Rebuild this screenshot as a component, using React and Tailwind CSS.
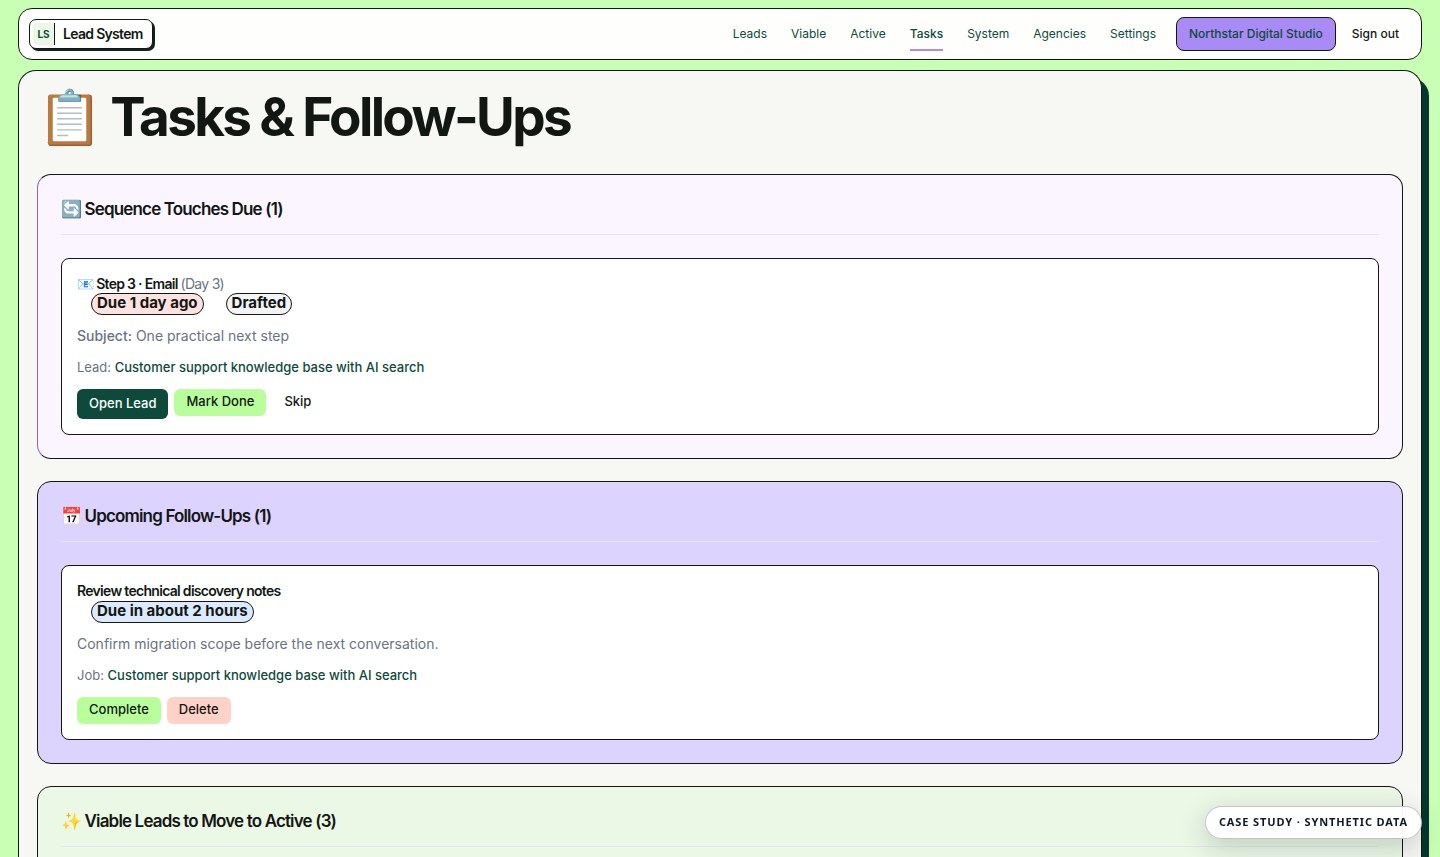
import clsx from 'clsx';

const navLinks = ['Leads', 'Viable', 'Active', 'Tasks', 'System', 'Agencies', 'Settings'];

const Header = ({ active }) => (
  <header className="flex items-center justify-between rounded-[14px] border border-[#131713] bg-[#fefffd] h-[52px] px-[10px]">
    <a
      href="#"
      className="flex items-center h-[30px] rounded-[7px] border border-[#131713] bg-white pl-[3px] pr-[9px] shadow-[2px_2px_0_#10231c]"
    >
      <span className="flex h-[22px] w-[22px] items-center justify-center rounded-l-sm border-r border-[#131713] bg-[#ecf8e6] text-[10px] font-bold text-[#0d4a3c]">
        LS
      </span>
      <span className="ml-2 text-sm font-semibold tracking-tighter">Lead System</span>
    </a>

    <nav className="flex items-center text-xs text-[#0d4a3c]">
      {navLinks.map((label) => (
        <a
          key={label}
          href="#"
          className={clsx(
            'mr-6 border-b-2 pt-[9px] pb-[7px] leading-4 last-of-type:mr-0',
            label === active ? 'border-[#a98bf5] font-medium' : 'border-transparent'
          )}
        >
          {label}
        </a>
      ))}
      <button
        type="button"
        className="ml-5 h-[34px] rounded-lg border border-[#131713] bg-[#a98bf5] px-3 font-medium"
      >
        Northstar Digital Studio
      </button>
      <button type="button" className="ml-1 h-[34px] px-3 font-medium text-[#131713]">
        Sign out
      </button>
    </nav>
  </header>
);

const Section = ({ icon, title, className, children }) => (
  <section className={clsx('rounded-[14px] border border-[#131713] px-[23px] pt-[22px] pb-[23px]', className)}>
    <h2 className="mb-[23px] border-b border-[#e5e7eb] pb-[13px] text-[17px] leading-6 font-semibold tracking-tighter">
      {icon} {title}
    </h2>
    {children}
  </section>
);

const Card = ({ children }) => (
  <article className="rounded-lg border border-[#131713] bg-white p-[15px]">{children}</article>
);

const Badge = ({ className, children }) => (
  <span
    className={clsx(
      'flex h-[22px] items-center rounded-full border border-[#131713] px-[5px] pb-px text-[15px] font-bold',
      className
    )}
  >
    {children}
  </span>
);

const ActionButton = ({ className, children }) => (
  <button
    type="button"
    className={clsx('h-[27px] rounded-md px-3 pb-px text-[13px] font-medium', className)}
  >
    {children}
  </button>
);

const App = () => {
  return (
    <div className="min-h-screen bg-[#c8ffb5] px-[18px] pt-2 font-['Inter',sans-serif] text-[#131713]">
      <Header active="Tasks" />

      <main className="mt-[10px] rounded-t-[18px] border border-b-0 border-[#131713] bg-[#f7f8f3] px-[18px] pt-[15px] pb-8 shadow-[7px_8px_0_#05372e]">
        <h1 className="mb-[26px] text-[53px] leading-[62px] font-bold tracking-tighter">
          📋 Tasks &amp; Follow-Ups
        </h1>

        <div className="flex flex-col gap-[22px]">
          <Section icon="🔄" title="Sequence Touches Due (1)" className="border-l-[#8b5cf6] bg-[#faf5ff]">
            <Card>
              <h3 className="text-sm leading-[19px] font-semibold tracking-tighter">
                📧 Step 3 · Email <span className="font-normal text-[#6b7280]">(Day 3)</span>
              </h3>
              <div className="ml-[14px] flex gap-[22px]">
                <Badge className="bg-[#fee2e2]">Due 1 day ago</Badge>
                <Badge className="bg-[#f3f4f6]">Drafted</Badge>
              </div>
              <p className="mt-[10px] text-sm leading-[22px] text-[#6b7280]">
                <strong className="font-medium">Subject:</strong> One practical next step
              </p>
              <p className="mt-[10px] text-[13px] leading-5 text-[#6b7280]">
                Lead:{' '}
                <a href="#" className="font-medium text-[#0d4a3c]">
                  Customer support knowledge base with AI search
                </a>
              </p>
              <div className="mt-3 flex items-start gap-[6px]">
                <a
                  href="#"
                  className="flex h-[30px] items-center rounded-md bg-[#0d4a3c] px-3 text-[13px] font-medium text-white"
                >
                  Open Lead
                </a>
                <ActionButton className="bg-[#b8ff9c]">Mark Done</ActionButton>
                <ActionButton>Skip</ActionButton>
              </div>
            </Card>
          </Section>

          <Section icon="📅" title="Upcoming Follow-Ups (1)" className="bg-[#ddd3ff]">
            <Card>
              <h3 className="text-sm leading-5 font-semibold tracking-tighter">
                Review technical discovery notes
              </h3>
              <div className="ml-[14px] flex gap-[22px]">
                <Badge className="bg-[#dbeafe]">Due in about 2 hours</Badge>
              </div>
              <p className="mt-[10px] text-sm leading-[22px] text-[#6b7280]">
                Confirm migration scope before the next conversation.
              </p>
              <p className="mt-[10px] text-[13px] leading-5 text-[#6b7280]">
                Job:{' '}
                <a href="#" className="font-medium text-[#0d4a3c]">
                  Customer support knowledge base with AI search
                </a>
              </p>
              <div className="mt-3 flex items-start gap-[6px]">
                <ActionButton className="bg-[#b8ff9c]">Complete</ActionButton>
                <ActionButton className="bg-[#ffd2c7]">Delete</ActionButton>
              </div>
            </Card>
          </Section>

          <Section icon="✨" title="Viable Leads to Move to Active (3)" className="bg-[#ecf8e6]" />
        </div>
      </main>

      {/* Demo notice */}
      <div className="fixed right-[18px] bottom-[18px] flex h-[33px] items-center rounded-full border border-[#131713]/25 bg-white/95 px-[13px] font-['Noto_Sans',sans-serif] text-[11px] font-bold tracking-[0.08em] text-[#111827] shadow-[0_8px_28px_rgba(17,24,39,0.2)]">
        CASE STUDY · SYNTHETIC DATA
      </div>
    </div>
  );
};

export default App;
